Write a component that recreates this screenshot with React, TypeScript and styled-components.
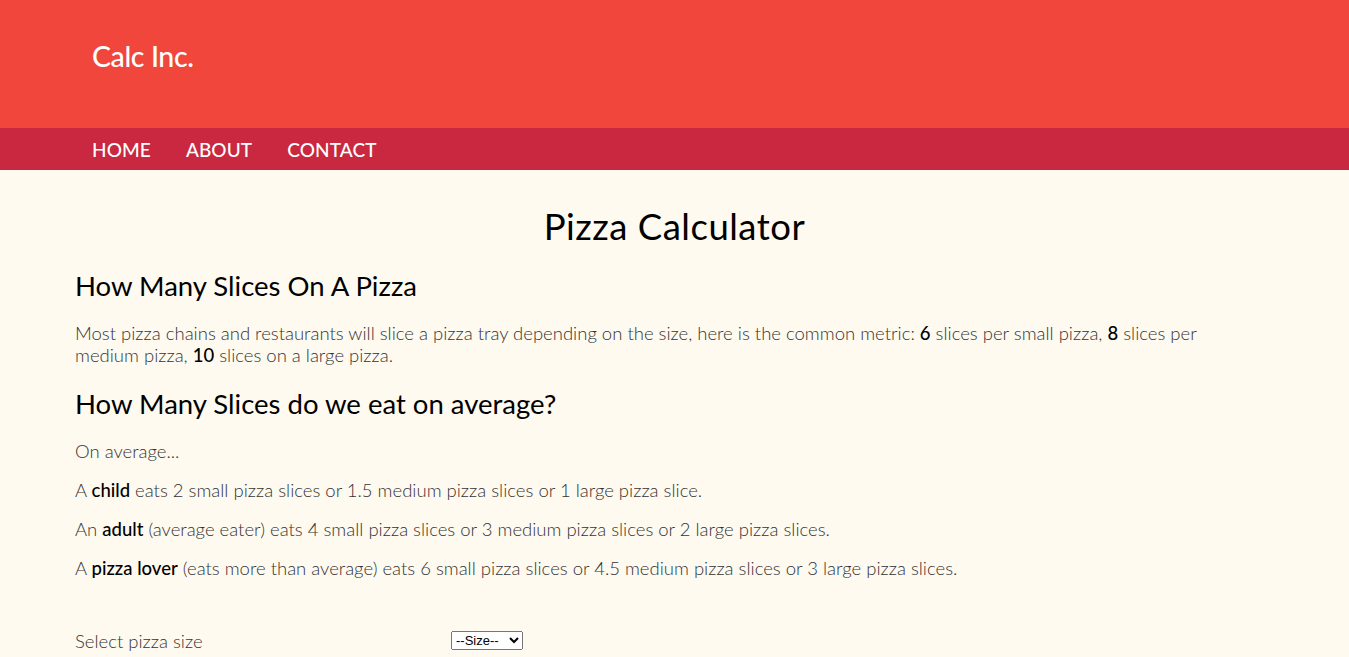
import React from "react";
import styled, { createGlobalStyle } from "styled-components";

const Global = createGlobalStyle`
  html, body { margin: 0; padding: 0; }
  body {
    background: #fffaf0;
    font-family: "Lato", "Open Sans", sans-serif;
    color: #333;
  }
`;

const Header = styled.header`
  background: #f0463c;
  height: 128px;
  display: flex;
  align-items: flex-start;
  padding: 39px 0 0 92px;
  box-sizing: border-box;
`;

const Brand = styled.div`
  color: #fff;
  font-size: 28.5px;
  font-weight: 500;
  letter-spacing: -0.4px;
`;

const Nav = styled.nav`
  background: #c92840;
  height: 42px;
  display: flex;
  align-items: center;
  gap: 35px;
  padding-left: 92px;
`;

const NavLink = styled.a`
  color: #fff;
  font-size: 19px;
  font-weight: 500;
  text-decoration: none;
  letter-spacing: 0.1px;
`;

const Main = styled.main`
  padding: 0 75px;
`;

const Title = styled.h1`
  text-align: center;
  font-size: 36.5px;
  font-weight: 400;
  color: #000;
  margin: 34px 0 21px;
  letter-spacing: 0.5px;
`;

const H2 = styled.h2`
  font-size: 27.5px;
  font-weight: 400;
  color: #000;
  margin: 21px 0 21px;
`;

const P = styled.p`
  max-width: 1175px;
  font-size: 18.5px;
  font-weight: 300;
  line-height: 21.5px;
  margin: 0 0 17.5px;
  color: #333;
  b { font-weight: 500; color: #000; }
`;

const Line = styled.span`
  display: inline;
`;

const Row = styled.div`
  display: grid;
  grid-template-columns: 376px auto;
  align-items: center;
  margin-top: 50px;
`;

const Label = styled.span`
  font-size: 18.5px;
  font-weight: 300;
  color: #333;
`;

const Select = styled.select`
  justify-self: start;
  font-family: "Liberation Sans", Arial, sans-serif;
  font-size: 13px;
  width: 72px;
  height: 19px;
`;

export default function App() {
  return (
    <>
      <Global />
      <Header>
        <Brand>Calc Inc.</Brand>
      </Header>
      <Nav>
        <NavLink href="#">HOME</NavLink>
        <NavLink href="#">ABOUT</NavLink>
        <NavLink href="#">CONTACT</NavLink>
      </Nav>
      <Main>
        <Title>Pizza Calculator</Title>
        <H2>How Many Slices On A Pizza</H2>
        <P>
          <Line>
            Most pizza chains and restaurants will slice a pizza tray depending on the size, here is the common
            metric: <b>6</b> slices per small pizza, <b>8</b> slices per
          </Line>{" "}
          <Line>
            medium pizza, <b>10</b> slices on a large pizza.
          </Line>
        </P>
        <H2>How Many Slices do we eat on average?</H2>
        <P>On average...</P>
        <P>
          A <b>child</b> eats 2 small pizza slices or 1.5 medium pizza slices or 1 large pizza slice.
        </P>
        <P>
          An <b>adult</b> (average eater) eats 4 small pizza slices or 3 medium pizza slices or 2 large pizza slices.
        </P>
        <P>
          A <b>pizza lover</b> (eats more than average) eats 6 small pizza slices or 4.5 medium pizza slices or 3 large
          pizza slices.
        </P>
        <Row>
          <Label>Select pizza size</Label>
          <Select defaultValue="">
            <option value="">--Size--</option>
            <option value="s">Small</option>
            <option value="m">Medium</option>
            <option value="l">Large</option>
          </Select>
        </Row>
      </Main>
    </>
  );
}
